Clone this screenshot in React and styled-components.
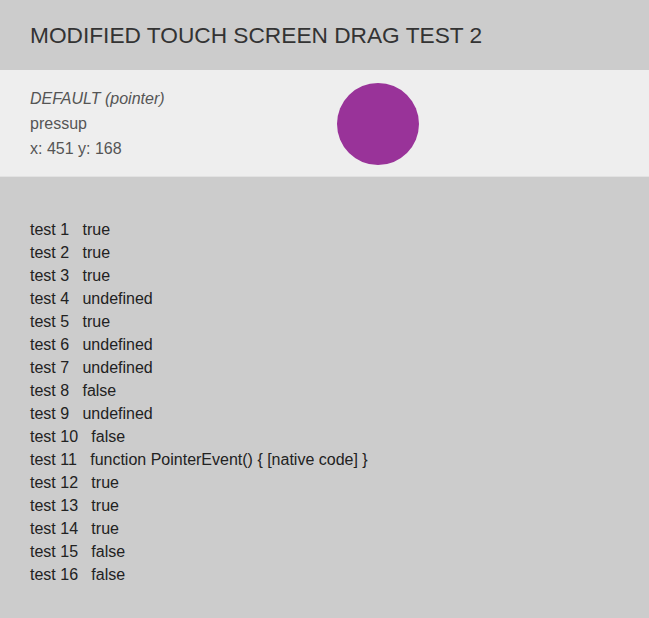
import React from "react";
import styled, { createGlobalStyle } from "styled-components";

const GlobalStyle = createGlobalStyle`
  html, body {
    margin: 0;
    padding: 0;
    background: #cccccc;
  }
  body {
    font-family: "Liberation Sans", Arial, sans-serif;
  }
`;

const Page = styled.div`
  width: 649px;
  min-height: 618px;
  background: #cccccc;
`;

const Header = styled.div`
  height: 70px;
  box-sizing: border-box;
  padding: 21px 30px 0;
`;

const Title = styled.h1`
  margin: 0;
  font-size: 22.7px;
  font-weight: 400;
  line-height: 28px;
  color: #333333;
`;

const Panel = styled.div`
  display: flex;
  align-items: center;
  height: 107px;
  box-sizing: border-box;
  padding: 0 30px;
  background: #eeeeee;
  border-bottom: 1px solid #e2e2e2;
`;

const Info = styled.div`
  width: 307px;
  font-size: 16px;
  line-height: 25px;
  color: #555555;
`;

const Line = styled.div`
  font-style: ${(p) => (p.$italic ? "italic" : "normal")};
`;

const Ball = styled.div`
  width: 82px;
  height: 82px;
  margin-top: 1px;
  border-radius: 50%;
  background: #993399;
`;

const Results = styled.div`
  padding: 41px 30px 0;
  font-size: 16px;
  line-height: 23px;
  color: #222222;
`;

const Row = styled.div`
  white-space: pre;
`;

const tests = [
  "true",
  "true",
  "true",
  "undefined",
  "true",
  "undefined",
  "undefined",
  "false",
  "undefined",
  "false",
  "function PointerEvent() { [native code] }",
  "true",
  "true",
  "true",
  "false",
  "false",
];

const App = () => {
  return (
    <Page>
      <GlobalStyle />
      <Header>
        <Title>MODIFIED TOUCH SCREEN DRAG TEST 2</Title>
      </Header>
      <Panel>
        <Info>
          <Line $italic>DEFAULT (pointer)</Line>
          <Line>pressup</Line>
          <Line>x: 451 y: 168</Line>
        </Info>
        <Ball />
      </Panel>
      <Results>
        {tests.map((value, i) => (
          <Row key={i}>{`test ${i + 1}   ${value}`}</Row>
        ))}
      </Results>
    </Page>
  );
};

export default App;
